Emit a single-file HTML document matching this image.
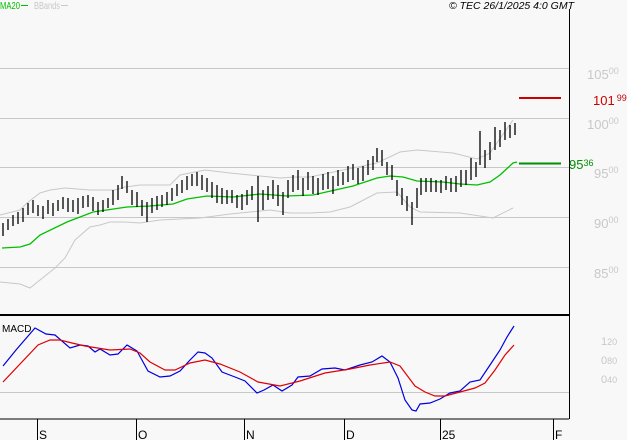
<!DOCTYPE html>
<html><head><meta charset="utf-8"><style>
html,body{margin:0;padding:0;background:#f8f8f8;}
body{width:627px;height:440px;overflow:hidden;position:relative;font-family:"Liberation Sans",sans-serif;}
svg{position:absolute;left:0;top:0;}
</style></head><body>
<svg width="627" height="440" viewBox="0 0 627 440" xmlns="http://www.w3.org/2000/svg" font-family="Liberation Sans, sans-serif">
<rect width="627" height="440" fill="#f8f8f8"/>
<g stroke="#c8c8c8" stroke-width="1">
<line x1="0" y1="68.5" x2="569" y2="68.5"/>
<line x1="0" y1="118.5" x2="569" y2="118.5"/>
<line x1="0" y1="167.5" x2="569" y2="167.5"/>
<line x1="0" y1="217.5" x2="569" y2="217.5"/>
<line x1="0" y1="267.5" x2="569" y2="267.5"/>
<line x1="0" y1="392.5" x2="569" y2="392.5"/>
</g>
<polyline fill="none" stroke="#c8c8c8" stroke-width="1" points="0,215 20,210 27,203 40,193 50,190 65,188 90,190 115,190 125,187 140,185 170,185 180,175 195,172 205,170 230,173 260,176 280,178 295,177 310,177 343,170 377,163 400,152 417,150 453,153 477,159 490,153 513,120"/>
<polyline fill="none" stroke="#c8c8c8" stroke-width="1" points="0,282 20,284 30,288 40,280 55,268 65,258 75,240 90,227 100,225 110,222 125,222 140,223 160,220 200,218 230,214 250,212 270,210 290,213 310,213 330,212 350,207 377,193 397,192 410,207 420,212 460,213 493,218 513,208"/>
<polyline fill="none" stroke="#00c000" stroke-width="1.3" points="2,248 20,247 30,244 40,235 67,222 93,212 127,207 150,206 173,204 187,199 207,196 233,197 260,194 287,196 313,195 353,186 377,178 390,176 403,177 417,181 443,182 460,184 477,185 490,182 500,175 513,163 517,162"/>
<path fill="none" stroke="#000" stroke-width="1.3" d="
M3,223V236M8,219V230M13,215V226M18,212V224M23,208V222M28,203V215M33,200V213M38,205V216M43,206V219M48,200V214M53,203V216M58,200V211M63,197V209M68,198V212M73,200V212M78,198V214M83,196V208M88,195V207M93,197V211M98,202V215M103,200V212M108,198V208M113,190V205M118,185V200M122,176V189M127,181V193M132,190V205M137,192V207M142,200V216M147,202V222M152,198V213M157,196V210M162,195V207M167,192V205M172,188V201M177,184V196M182,180V193M187,176V190M192,174V186M197,172V186M202,175V190M207,178V192M212,182V198M217,185V203M222,188V204M227,190V204M232,190V203M237,195V208M242,194V210M247,190V205M252,186V200M258,176V222M263,190V210M268,186V200M273,180V199M278,185V206M283,192V215M288,180V198M293,175V192M298,170V190M303,178V196M308,172V190M313,176V194M318,178V195M323,174V190M328,172V189M333,176V194M338,170V186M343,172V185M348,166V182M353,164V180M358,168V184M363,166V181M368,160V175M373,156V170M377,148V162M382,150V166M387,162V175M392,165V180M397,180V196M402,188V205M407,196V211M412,202V225M417,188V208M421,178V195M426,178V192M431,178V192M436,180V192M441,180V193M446,176V190M451,178V192M456,176V192M461,170V187M466,170V185M471,158V180M476,162V177M480,131V165M485,150V168M490,142V160M495,127V150M500,130V147M505,122V140M510,125V138M515,123V135"/>
<line x1="569.5" y1="9" x2="569.5" y2="419" stroke="#000" stroke-width="1"/>
<line x1="0" y1="315" x2="569" y2="315" stroke="#000" stroke-width="2"/>
<line x1="0" y1="419" x2="569" y2="419" stroke="#000" stroke-width="1"/>
<g stroke="#000" stroke-width="1">
<line x1="37.5" y1="419" x2="37.5" y2="440"/>
<line x1="136.5" y1="419" x2="136.5" y2="440"/>
<line x1="244.5" y1="419" x2="244.5" y2="440"/>
<line x1="344.5" y1="419" x2="344.5" y2="440"/>
<line x1="440.5" y1="419" x2="440.5" y2="440"/>
<line x1="553.5" y1="419" x2="553.5" y2="440"/>
</g>
<g font-size="12" fill="#000">
<text x="39" y="439">S</text>
<text x="138" y="439">O</text>
<text x="246" y="439">N</text>
<text x="346" y="439">D</text>
<text x="442" y="439">25</text>
<text x="555" y="439">F</text>
</g>
<polyline fill="none" stroke="#0000e0" stroke-width="1.2" points="3,366 16,350 35,328 46,334 55,335 70,348 80,345 88,346 95,352 100,349 110,355 118,354 127,345 137,351 148,371 160,377 170,376 180,371 190,360 198,352 205,353 212,358 222,372 235,377 245,381 257,393 264,390 273,385 282,391 292,385 298,377 310,376 322,369 335,368 345,370 360,365 372,362 382,356 390,362 398,378 405,400 412,410 416,411 420,404 430,403 440,399 450,393 460,391 470,382 480,380 490,365 500,350 507,337 514,326"/>
<polyline fill="none" stroke="#e00000" stroke-width="1.2" points="3,382 38,345 50,340 60,340 72,343 85,346 110,350 130,349 140,353 150,362 165,370 175,370 190,363 205,360 220,364 240,372 258,382 280,386 300,381 325,373 350,369 370,365 390,362 400,366 415,386 425,392 435,396 445,396 460,392 475,388 485,383 495,370 505,355 514,345"/>
<text x="2" y="332" font-size="10" fill="#000">MACD</text>
<g font-size="11" fill="#c8c8c8">
<text x="601" y="345">1<tspan font-size="9">20</tspan></text>
<text x="601" y="364">0<tspan font-size="9">80</tspan></text>
<text x="601" y="383">0<tspan font-size="9">40</tspan></text>
</g>
<g font-size="13" fill="#c8c8c8">
<text x="587" y="79">105<tspan font-size="9" dy="-5">00</tspan></text>
<text x="587" y="129">100<tspan font-size="9" dy="-5">00</tspan></text>
<text x="594" y="178">95<tspan font-size="9" dy="-5">00</tspan></text>
<text x="594" y="228">90<tspan font-size="9" dy="-5">00</tspan></text>
<text x="594" y="278">85<tspan font-size="9" dy="-5">00</tspan></text>
</g>
<line x1="519" y1="98" x2="561" y2="98" stroke="#cc0000" stroke-width="2"/>
<text x="593" y="105" font-size="13" fill="#cc0000">101<tspan font-size="9" dx="2" dy="-4">99</tspan></text>
<line x1="519" y1="163.5" x2="561" y2="163.5" stroke="#009000" stroke-width="2"/>
<text x="569" y="169" font-size="13" fill="#009000">95<tspan font-size="9" dy="-3">36</tspan></text>
<text x="0" y="9" font-size="10" fill="#00c000" textLength="20" lengthAdjust="spacingAndGlyphs">MA20</text>
<line x1="21" y1="5.5" x2="28" y2="5.5" stroke="#00c000" stroke-width="1"/>
<text x="34" y="9" font-size="10" fill="#c8c8c8" textLength="26" lengthAdjust="spacingAndGlyphs">BBands</text>
<line x1="61" y1="5.5" x2="68" y2="5.5" stroke="#c8c8c8" stroke-width="1"/>
<text x="449" y="9" font-size="10" font-style="italic" fill="#000" textLength="125" lengthAdjust="spacingAndGlyphs">© TEC 26/1/2025 4:0 GMT</text>
</svg>
</body></html>
